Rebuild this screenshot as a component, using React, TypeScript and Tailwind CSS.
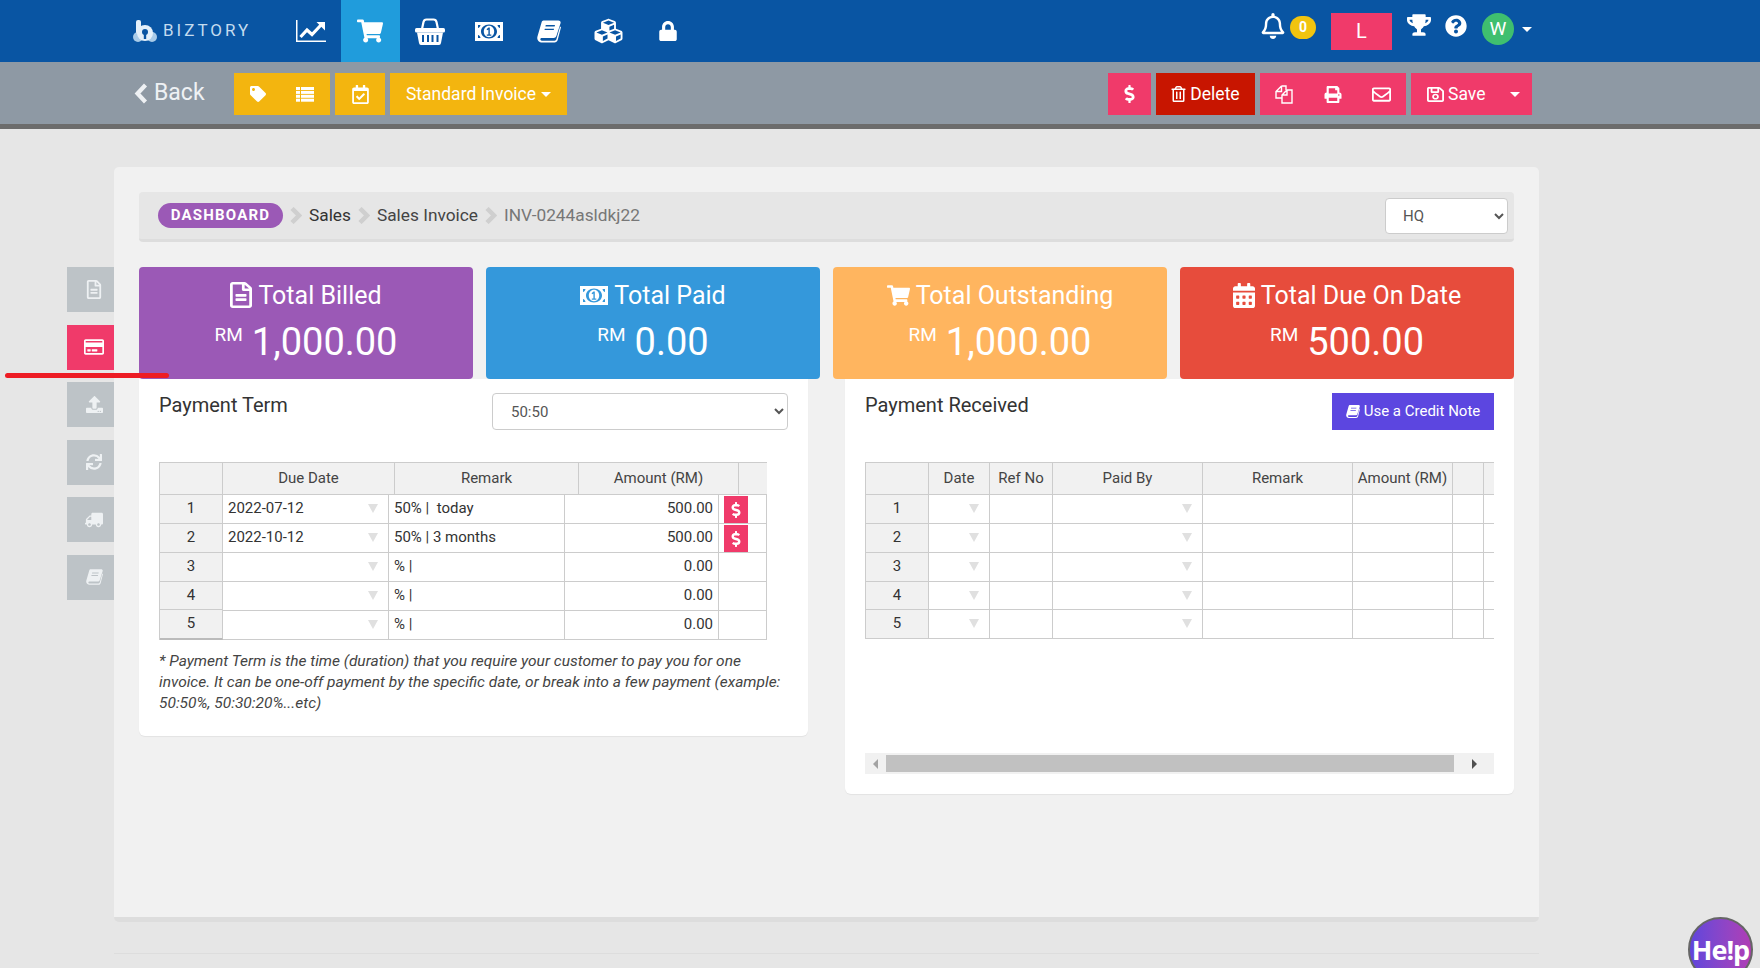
import { ReactNode } from "react";
import {
  FaCalendarAlt,
  FaCubes,
  FaDollarSign,
  FaLock,
  FaPrint,
  FaQuestionCircle,
  FaRegBell,
  FaRegCalendarCheck,
  FaRegCreditCard,
  FaRegEnvelope,
  FaRegFileAlt,
  FaRegSave,
  FaRegTrashAlt,
  FaShoppingCart,
  FaSync,
  FaTag,
  FaTrophy,
  FaTruck,
  FaUpload,
} from "react-icons/fa";

// FA4 shapes that react-icons no longer ships
const MoneyIcon = ({ className }: { className?: string }) => (
  <svg viewBox="0 0 28 19" className={className} fill="currentColor">
    <path
      fillRule="evenodd"
      d="M0 0h28v19H0zM14 2.500C9.500 2.500 6 5.500 6 9.500s3.500 7 8 7 8-3 8-7-3.500-7-8-7zM14 3.800c3 0 5.200 2.600 5.200 5.700s-2.200 5.700-5.200 5.700-5.200-2.600-5.200-5.700 2.200-5.700 5.200-5.700zM14.800 5.500h-1.300l-2 1.800.9 1 1-.9V12.500h-1.600v1.300h4.500v-1.300h-1.500zM3 3v3c1 0 2.500-1.500 2.500-3zM25 3v3c-1 0-2.500-1.500-2.500-3zM3 16v-3c1 0 2.500 1.500 2.500 3zM25 16v-3c-1 0-2.500 1.500-2.500 3z"
    />
  </svg>
);

const BookIcon = ({ className }: { className?: string }) => (
  <svg viewBox="0 0 26 24" className={className} fill="currentColor">
    <path
      fillRule="evenodd"
      d="M7 0H23C25 0 26 1.500 25.500 3L21 17C20.500 18.500 19.500 19 18 19H5C3.500 19 3 21 4.500 21.800 5 22 5.500 22 6 22H19C20 22 20.800 21.500 21 20.500L25 6.500 26 7.500 22.500 21C22 23 20.500 24 19 24H5.500C2 24-.5 21 .5 17.500L5 2C5.300.8 6 0 7 0ZM9.500 5h10l-.4 1.500h-10zM8.500 9h10l-.4 1.500h-10z"
    />
  </svg>
);

const ChartIcon = () => (
  <svg viewBox="0 0 30 22" className="w-[30px] h-[22px]" fill="none" stroke="currentColor">
    <path d="M.75 0V21.250H30" strokeWidth="1.500" />
    <path d="M4.500 17L11 10l5 4.500L25 5" strokeWidth="3.200" />
    <path d="M20.500 2H29V10.500Z" fill="currentColor" stroke="none" />
  </svg>
);

const BasketIcon = () => (
  <svg viewBox="0 0 30 27" className="w-[30px] h-[27px]" fill="currentColor">
    <path d="M7 11L8.500 4Q9 1.500 11.500 1.500H18.500Q21 1.500 21.500 4L23 11" fill="none" stroke="currentColor" strokeWidth="2.200" />
    <rect x="0" y="10" width="30" height="4.500" rx="1.500" />
    <path
      fillRule="evenodd"
      d="M2 14.500H28L26 25Q25.700 27 24 27H6Q4.300 27 4 25ZM7 17h2v7H7zM12 17h2v7h-2zM16.500 17h2v7h-2zM21.500 17h2v7h-2z"
    />
  </svg>
);

const FilesIcon = () => (
  <svg viewBox="0 0 18 19" className="w-[18px] h-[19px]" fill="none" stroke="currentColor" strokeWidth="1.400">
    <path d="M6.500 1H11V5M6.500 1L1 6.500V13H7M6.500 1V6.500H1" />
    <path d="M12 5H17V18H7V10ZM12 5V10H7" />
  </svg>
);

const ListIcon = () => (
  <svg viewBox="0 0 18 15" className="w-[18px] h-[15px]" fill="currentColor">
    {[0, 3.900, 7.800, 11.700].map((y) => (
      <g key={y}>
        <rect x="0" y={y} width="4" height="3" />
        <rect x="5" y={y} width="13" height="3" />
      </g>
    ))}
  </svg>
);

const BackChevron = () => (
  <svg viewBox="0 0 14 21" className="w-[14px] h-[21px]" fill="none" stroke="currentColor" strokeWidth="4.200">
    <path d="M11.500 2L3.500 10.500 11.500 19" />
  </svg>
);

const Caret = () => <div className="w-0 h-0 border-x-[5px] border-x-transparent border-t-[5px] border-t-current" />;

const Logo = () => (
  <svg viewBox="0 0 24 22" className="w-[24px] h-[22px]">
    <circle cx="5" cy="17" r="5" fill="#a9cbe8" />
    <circle cx="19" cy="17" r="5" fill="#a9cbe8" />
    <rect x="3" y="0" width="5" height="14" rx="2" fill="#e4f0fa" />
    <circle cx="12" cy="13" r="8" fill="#e4f0fa" />
    <circle cx="12" cy="12" r="3" fill="#0955a3" />
    <rect x="10.800" y="12" width="2.400" height="7" fill="#0955a3" />
  </svg>
);

const navIcons = [
  { icon: <ChartIcon /> },
  { icon: <FaShoppingCart className="w-[26px] h-[24px]" />, active: true },
  { icon: <BasketIcon /> },
  { icon: <MoneyIcon className="w-[28px] h-[19px]" /> },
  { icon: <BookIcon className="w-[24px] h-[23px]" /> },
  { icon: <FaCubes className="w-[31px] h-[28px]" /> },
  { icon: <FaLock className="w-[18px] h-[20px]" /> },
];

const sideItems = [
  { icon: <FaRegFileAlt className="w-[16px] h-[19px]" /> },
  { icon: <FaRegCreditCard className="w-[20px] h-[18px]" />, active: true },
  { icon: <FaUpload className="w-[17px] h-[17px]" /> },
  { icon: <FaSync className="w-[16px] h-[16px]" /> },
  { icon: <FaTruck className="w-[18px] h-[16px] -scale-x-100" /> },
  { icon: <BookIcon className="w-[17px] h-[16px]" /> },
];

interface StatCardProps {
  title: string;
  amount: string;
  icon: ReactNode;
  color: string;
}

const StatCard = ({ title, amount, icon, color }: StatCardProps) => (
  <div className={`h-[112px] rounded-[4px] text-white flex flex-col items-center pt-[12px] ${color}`}>
    <div className="flex items-center gap-[6px] h-[32px] text-[25px] leading-none">
      {icon}
      <span>{title}</span>
    </div>
    <div className="flex items-start gap-[9px] mt-[6px] h-[50px]">
      <span className="text-[19px] leading-none mt-[8px]">RM</span>
      <span className="text-[38px] leading-[50px]">{amount}</span>
    </div>
  </div>
);

const Arrow = () => (
  <div className="absolute right-[10px] top-[9px] w-0 h-0 border-x-[5px] border-x-transparent border-t-[9px] border-t-[#e0e0e0]" />
);

const cellBase = "relative border-r border-b border-[#cccccc] text-[15px] text-[#333333] leading-[26px] whitespace-nowrap overflow-hidden";

const PayBtn = () => (
  <div className="flex items-center justify-center w-[24px] h-[27px] ml-[5px] mt-[1px] bg-[#f03a6a] text-white">
    <FaDollarSign className="w-[10px] h-[16px]" />
  </div>
);

const termRows = [
  { no: "1", date: "2022-07-12", remark: "50% |  today", amount: "500.00", pay: true, head: "" },
  { no: "2", date: "2022-10-12", remark: "50% | 3 months", amount: "500.00", pay: true, head: "" },
  { no: "3", date: "", remark: "% |", amount: "0.00", pay: false, head: "" },
  { no: "4", date: "", remark: "% |", amount: "0.00", pay: false, head: "h-[28px]" },
  // the row header column sits a pixel higher than the data from here down
  { no: "5", date: "", remark: "% |", amount: "0.00", pay: false, head: "-mt-[1px] h-[30px] border-b-2 border-b-[#bbbbbb]" },
];

const PaymentTermTable = () => (
  <div className="w-[608px] border-l border-[#cccccc]">
    <div className="grid grid-cols-[63px_172px_184px_160px_28px] h-[33px] border-t border-[#cccccc] bg-[#f1f1f1] text-[15px] text-[#444444] text-center leading-[30px]">
      {["", "Due Date", "Remark", "Amount (RM)"].map((h) => (
        <div key={h} className="border-r border-b border-[#cccccc]">{h}</div>
      ))}
      <div className="border-b border-[#cccccc]" />
    </div>
    {termRows.map((r) => (
      <div key={r.no} className="grid grid-cols-[63px_166px_176px_154px_48px] h-[29px]">
        <div className={`${cellBase} bg-[#f1f1f1] text-center ${r.head}`}>{r.no}</div>
        <div className={`${cellBase} pl-[5px]`}>
          {r.date}
          <Arrow />
        </div>
        <div className={`${cellBase} pl-[5px] whitespace-pre`}>{r.remark}</div>
        <div className={`${cellBase} pr-[5px] text-right`}>{r.amount}</div>
        <div className={cellBase}>{r.pay && <PayBtn />}</div>
      </div>
    ))}
  </div>
);

const receivedRows = [
  { no: "1", height: "h-[29px]" },
  { no: "2", height: "h-[29px]" },
  { no: "3", height: "h-[29px]" },
  { no: "4", height: "h-[28px]" },
  { no: "5", height: "h-[29px]" },
];

const PaymentReceivedTable = () => (
  <div className="w-[629px] overflow-hidden border-l border-[#cccccc]">
    <div className="grid grid-cols-[63px_61px_63px_150px_150px_100px_31px_30px] w-[648px] h-[33px] border-t border-[#cccccc] bg-[#f1f1f1] text-[15px] text-[#444444] text-center leading-[30px]">
      {["", "Date", "Ref No", "Paid By", "Remark", "Amount (RM)", " ", "  "].map((h) => (
        <div key={h} className="border-r border-b border-[#cccccc] whitespace-nowrap">{h}</div>
      ))}
    </div>
    {receivedRows.map((r) => (
      <div key={r.no} className={`grid grid-cols-[63px_61px_63px_150px_150px_100px_31px_30px] w-[648px] ${r.height}`}>
        <div className={`${cellBase} bg-[#f1f1f1] text-center`}>{r.no}</div>
        <div className={cellBase}><Arrow /></div>
        <div className={cellBase} />
        <div className={cellBase}><Arrow /></div>
        <div className={cellBase} />
        <div className={cellBase} />
        <div className={cellBase} />
        <div className={cellBase} />
      </div>
    ))}
  </div>
);

const ScrollBar = () => (
  <div className="flex items-center w-[629px] h-[21px] bg-[#f1f1f1]">
    <div className="w-[21px] flex justify-center">
      <div className="w-0 h-0 border-y-[5px] border-y-transparent border-r-[5px] border-r-[#a3a3a3]" />
    </div>
    <div className="w-[568px] h-[17px] bg-[#c1c1c1]" />
    <div className="flex-1 flex justify-center">
      <div className="w-0 h-0 border-y-[5px] border-y-transparent border-l-[5px] border-l-[#505050]" />
    </div>
  </div>
);

const Chevron = () => (
  <svg viewBox="0 0 12 17" className="w-[12px] h-[17px] mx-[7px]" fill="none" stroke="#cfcfcf" strokeWidth="4.500">
    <path d="M2 1.500l7 7-7 7" />
  </svg>
);

const App = () => {
  return (
    <div className="relative w-[1760px] h-[968px] overflow-hidden bg-[#e6e6e6] font-['Roboto',sans-serif]">
      {/* top nav */}
      <div className="flex h-[62px] bg-[#0955a3] text-white pl-[133px] pr-[228px]">
        <div className="flex items-center w-[148px] gap-[6px]">
          <Logo />
          <span className="text-[17px] tracking-[3px] text-[#c4dcef]">BIZTORY</span>
        </div>
        {navIcons.map((n, i) => (
          <div key={i} className={`flex items-center justify-center w-[59.500px] ${n.active ? "bg-[#209cdc]" : ""}`}>
            {n.icon}
          </div>
        ))}
        <div className="ml-auto flex items-start">
          <FaRegBell className="w-[24px] h-[26px] mt-[13px]" />
          <div className="w-[26px] h-[23px] mt-[16px] ml-[5px] rounded-full bg-[#f1c40f] text-center text-[14px] font-bold leading-[23px]">0</div>
          <div className="w-[61px] h-[37px] mt-[13px] ml-[15px] bg-[#f03a6a] text-center text-[20px] leading-[37px]">L</div>
          <FaTrophy className="w-[24px] h-[22px] mt-[14px] ml-[15px]" />
          <FaQuestionCircle className="w-[22px] h-[22px] mt-[15px] ml-[14px]" />
          <div className="w-[32px] h-[32px] mt-[13px] ml-[15px] rounded-full bg-[#3fbf6f] text-center text-[19px] leading-[32px]">W</div>
          <div className="mt-[27px] ml-[8px]"><Caret /></div>
        </div>
      </div>

      {/* action bar */}
      <div className="flex items-start h-[67px] bg-[#8e99a4] border-b-[5px] border-[#6c6c6c] text-white pl-[133px] pr-[228px] pt-[11px] text-[17.500px]">
        <div className="flex items-center w-[101px] h-[40px] pl-[1px] gap-[6px] text-[#eef1f4] text-[23px]">
          <BackChevron />
          <span>Back</span>
        </div>
        <div className="grid grid-cols-2 place-items-center w-[96px] h-[42px] pr-[2px] bg-[#f3b50f]">
          <FaTag className="w-[16px] h-[16px]" />
          <ListIcon />
        </div>
        <div className="flex items-center justify-center w-[50px] h-[42px] ml-[5px] bg-[#f3b50f]">
          <FaRegCalendarCheck className="w-[17px] h-[19px]" />
        </div>
        <div className="flex items-center justify-center gap-[5px] w-[177px] h-[42px] pt-[1px] ml-[5px] bg-[#f3b50f]">
          Standard Invoice
          <Caret />
        </div>
        <div className="ml-auto flex items-center justify-center w-[43px] h-[42px] bg-[#f03a6a]">
          <FaDollarSign className="w-[11px] h-[18px]" />
        </div>
        <div className="flex items-center justify-center gap-[4px] w-[99px] h-[42px] ml-[5px] bg-[#c81500]">
          <FaRegTrashAlt className="w-[15px] h-[16px]" />
          Delete
        </div>
        <div className="grid grid-cols-3 place-items-center w-[146px] h-[42px] ml-[5px] bg-[#f03a6a]">
          <FilesIcon />
          <FaPrint className="w-[18px] h-[17px]" />
          <FaRegEnvelope className="w-[19px] h-[19px]" />
        </div>
        <div className="flex items-center w-[121px] h-[42px] ml-[5px] pl-[16px] gap-[4px] bg-[#f03a6a]">
          <FaRegSave preserveAspectRatio="none" className="w-[17px] h-[17px]" />
          Save
          <div className="ml-auto mr-[12px]"><Caret /></div>
        </div>
      </div>

      <div className="flex pl-[67px] pt-[38px]">
        {/* side tabs */}
        <div className="flex flex-col gap-[12.600px] w-[47px] pt-[100px]">
          {sideItems.map((s, i) => (
            <div
              key={i}
              className={`flex items-center justify-center h-[45px] pl-[7px] text-[#eef1f3] ${s.active ? "bg-[#f03a6a] text-white" : "bg-[#bdc3c7]"}`}
            >
              {s.icon}
            </div>
          ))}
        </div>

        {/* main panel */}
        <div className="w-[1425px] h-[755px] px-[25px] pt-[25px] bg-[#f1f1f1] border-b-[5px] border-[#dddddd] rounded-[5px]">
          <div className="flex items-center h-[50px] pl-[19px] pr-[6px] bg-[#e6e6e6] border-b-[3px] border-[#dddddd] rounded-[4px]">
            <div className="flex items-center justify-center w-[125px] h-[25px] rounded-full bg-[#9b59b6] text-white text-[15px] font-bold tracking-[1.200px]">
              DASHBOARD
            </div>
            <Chevron />
            <span className="text-[17.300px] text-[#333333]">Sales</span>
            <Chevron />
            <span className="text-[17.300px] text-[#444444]">Sales Invoice</span>
            <Chevron />
            <span className="text-[17.300px] text-[#777777]">INV-0244asldkj22</span>
            <select className="ml-auto w-[123px] h-[36px] pl-[13px] bg-white border border-[#cccccc] rounded-[4px] text-[15px] text-[#555555]">
              <option>HQ</option>
            </select>
          </div>

          <div className="grid grid-cols-4 gap-[13px] mt-[25px]">
            <StatCard title="Total Billed" amount="1,000.00" color="bg-[#9b59b6]" icon={<FaRegFileAlt preserveAspectRatio="none" className="w-[22px] h-[26px]" />} />
            <StatCard title="Total Paid" amount="0.00" color="bg-[#3498db]" icon={<MoneyIcon className="w-[28px] h-[19px]" />} />
            <StatCard title="Total Outstanding" amount="1,000.00" color="bg-[#ffb55f]" icon={<FaShoppingCart className="w-[23px] h-[21px]" />} />
            <StatCard title="Total Due On Date" amount="500.00" color="bg-[#e74c3c]" icon={<FaCalendarAlt preserveAspectRatio="none" className="w-[22px] h-[25px]" />} />
          </div>

          <div className="flex items-start gap-[37px]">
            {/* payment term */}
            <div className="w-[669px] h-[357px] px-[20px] pt-[14px] bg-white rounded-b-[6px] shadow-[0_1px_1px_rgba(0,0,0,0.06)]">
              <div className="flex items-start justify-between h-[37px] text-[20px] text-[#333333]">
                <span className="leading-[24px]">Payment Term</span>
                <select className="w-[296px] h-[37px] pl-[14px] bg-white border border-[#cccccc] rounded-[4px] text-[15px] text-[#555555]">
                  <option>50:50</option>
                </select>
              </div>
              <div className="mt-[32px]">
                <PaymentTermTable />
              </div>
              <p className="mt-[11px] text-[15.500px] leading-[21px] italic text-[#444444]">
                * Payment Term is the time (duration) that you require your customer to pay you for one invoice. It can be one-off payment by the specific date, or break into a few payment (example: 50:50%, 50:30:20%...etc)
              </p>
            </div>

            {/* payment received */}
            <div className="w-[669px] h-[415px] pl-[20px] pt-[14px] bg-white rounded-b-[6px] shadow-[0_1px_1px_rgba(0,0,0,0.06)]">
              <div className="flex items-start justify-between w-[629px] h-[37px] text-[20px] text-[#333333]">
                <span className="leading-[24px]">Payment Received</span>
                <div className="flex items-center justify-center gap-[4px] w-[162px] h-[37px] bg-[#5c46e0] text-white text-[15px]">
                  <BookIcon className="w-[14px] h-[13px]" />
                  Use a Credit Note
                </div>
              </div>
              <div className="mt-[32px]">
                <PaymentReceivedTable />
              </div>
              <div className="mt-[114px]">
                <ScrollBar />
              </div>
            </div>
          </div>
        </div>
      </div>

      {/* footer rule */}
      <div className="ml-[114px] mt-[31px] w-[1425px] h-px bg-[#dddddd]" />

      {/* red marker drawn over the screenshot */}
      <div className="absolute left-[5px] top-[373px] w-[164px] h-[5px] rounded-full bg-[#ed1c24]" />

      {/* help bubble */}
      <div className="absolute left-[1688px] top-[917px] w-[65px] h-[65px] rounded-full border-2 border-[#666666] bg-gradient-to-r from-[#5f45dc] to-[#b03cb5] text-white text-center text-[27px] font-bold font-['Open_Sans',sans-serif] tracking-[-1px] leading-[62px]">
        He!p
      </div>
    </div>
  );
};

export default App;
